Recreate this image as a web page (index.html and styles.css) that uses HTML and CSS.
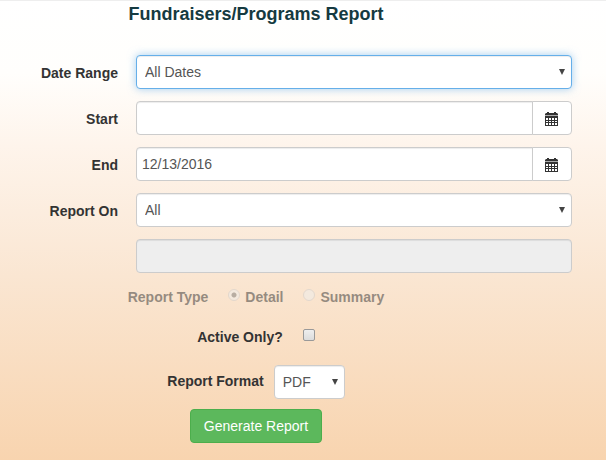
FILE: index.html
```html
<!DOCTYPE html>
<html lang="en">
<head>
<meta charset="utf-8">
<title>Fundraisers/Programs Report</title>
<link rel="stylesheet" href="styles.css">
</head>
<body>
<svg class="sprite" aria-hidden="true">
  <symbol id="calendar" viewBox="0 0 13 14">
    <path d="M1 1h1V0h2v1h5V0h2v1h1l1 1v1H0V2z"/>
    <path fill="#aaa" d="M0 3h13v1H0z"/>
    <path fill-rule="evenodd" d="M0 4h13v10H0zM1 6v2h2V6zM4 6v2h2V6zM7 6v2h2V6zM10 6v2h2V6zM1 9v1h2V9zM4 9v1h2V9zM7 9v1h2V9zM10 9v1h2V9zM1 11v2h2v-2zM4 11v2h2v-2zM7 11v2h2v-2zM10 11v2h2v-2z"/>
  </symbol>
  <symbol id="arrow" viewBox="0 0 6 6"><path d="M0 0h6L3 6z"/></symbol>
</svg>
<form class="report">
  <h1 class="title">Fundraisers/Programs Report</h1>
  <div class="fields">
    <label for="range">Date Range</label>
    <div class="select-wrap">
      <select id="range" class="control focused"><option>All Dates</option></select>
      <svg class="arrow" aria-hidden="true"><use href="#arrow"/></svg>
    </div>
    <label for="start">Start</label>
    <div class="group">
      <input id="start" class="control" type="text">
      <button class="picker" type="button" aria-label="Pick start date"><svg class="icon"><use href="#calendar"/></svg></button>
    </div>
    <label for="end">End</label>
    <div class="group">
      <input id="end" class="control" type="text" value="12/13/2016">
      <button class="picker" type="button" aria-label="Pick end date"><svg class="icon"><use href="#calendar"/></svg></button>
    </div>
    <label for="on">Report On</label>
    <div class="select-wrap">
      <select id="on" class="control"><option>All</option></select>
      <svg class="arrow" aria-hidden="true"><use href="#arrow"/></svg>
    </div>
    <input class="control detail" type="text" aria-label="Report item" disabled>
  </div>
  <div class="options">
    <div class="row types" role="radiogroup" aria-labelledby="type">
      <span id="type">Report Type</span>
      <span class="choice"><input id="detail" class="radio" type="radio" name="type" checked disabled><label for="detail">Detail</label></span>
      <span class="choice"><input id="summary" class="radio" type="radio" name="type" disabled><label for="summary">Summary</label></span>
    </div>
    <div class="row active">
      <label for="active">Active Only?</label>
      <input id="active" class="check" type="checkbox">
    </div>
    <div class="row format">
      <label for="format">Report Format</label>
      <div class="select-wrap">
        <select id="format" class="control"><option>PDF</option></select>
        <svg class="arrow" aria-hidden="true"><use href="#arrow"/></svg>
      </div>
    </div>
    <button class="generate" type="submit">Generate Report</button>
  </div>
</form>
</body>
</html>
```
FILE: styles.css
```css
* { box-sizing: border-box; }
html { min-height: 100%; background: linear-gradient(#fff 0, #fffefc 16%, #fef4eb 32%, #fae6d2 60%, #f8d4af 100%); }
body {
  margin: 0;
  border-top: 1px solid #eee;
  color: #333;
  font: 14px/20px "Liberation Sans", Arial, sans-serif;
}
.sprite { position: absolute; width: 0; height: 0; }
.report { padding: 2px 34px 16px 0; }
.title {
  margin: 0;
  padding-right: 60px;
  color: #153a41;
  font-size: 18px;
  line-height: 22px;
  text-align: center;
}
.fields {
  display: grid;
  grid-template-columns: 118px 1fr;
  gap: 12px 18px;
  align-items: center;
  margin-top: 30px;
}
.fields > label { padding-top: 2px; text-align: right; }
label, .types { font-weight: bold; }
.detail { grid-column: 2; }
.control {
  display: block;
  width: 100%;
  height: 34px;
  margin: 0;
  padding: 0 5px;
  border: 1px solid #ccc;
  border-radius: 4px;
  outline: 0;
  background: #fff;
  box-shadow: inset 0 1px 1px rgba(0, 0, 0, .075);
  color: #555;
  font: inherit;
  appearance: none;
}
.control:disabled { background: #eee; }
select.control { padding: 0 8px; }
.focused {
  border-color: #66afe9;
  box-shadow: inset 0 1px 1px rgba(0, 0, 0, .075), 0 0 8px rgba(102, 175, 233, .6);
}
.select-wrap { position: relative; }
.arrow {
  position: absolute;
  top: 14px;
  right: 7px;
  width: 6px;
  height: 6px;
  fill: #444;
  pointer-events: none;
}
.group { display: flex; }
.group .control { flex: 1; min-width: 0; border-radius: 4px 0 0 4px; }
.picker {
  display: flex;
  align-items: center;
  justify-content: center;
  width: 40px;
  margin: 0 0 0 -1px;
  padding: 2px 1px 0 0;
  border: 1px solid #ccc;
  border-radius: 0 4px 4px 0;
  background: #fff;
}
.icon { width: 13px; height: 14px; fill: #333; }
.options {
  display: flex;
  flex-direction: column;
  align-items: center;
  padding: 14px 60px 0 0;
}
.row { display: flex; align-items: center; }
.types { gap: 20px; opacity: .5; }
.choice { display: flex; gap: 5px; }
.radio, .check { appearance: none; margin: 0; border: 1px solid #aaa; }
.radio {
  width: 12px;
  height: 12px;
  margin-top: 2px;
  border-color: #ccc;
  border-radius: 50%;
  background: #eee;
}
.radio:checked { background: radial-gradient(circle, #777 0 2px, #eee 3px); }
.active { gap: 20px; margin-top: 20px; }
.check {
  width: 12px;
  height: 12px;
  margin-bottom: 4px;
  border-color: #999;
  border-radius: 2px;
  background: linear-gradient(#eee, #dcdcdc);
}
.format { gap: 10px; margin-top: 18px; }
.format label { padding-bottom: 2px; }
.format .control { width: 71px; }
.generate {
  height: 34px;
  margin: 10px 0 0;
  padding: 0 13px;
  border: 1px solid #4cae4c;
  border-radius: 4px;
  background: #5cb85c;
  color: #fff;
  font: inherit;
}
```
